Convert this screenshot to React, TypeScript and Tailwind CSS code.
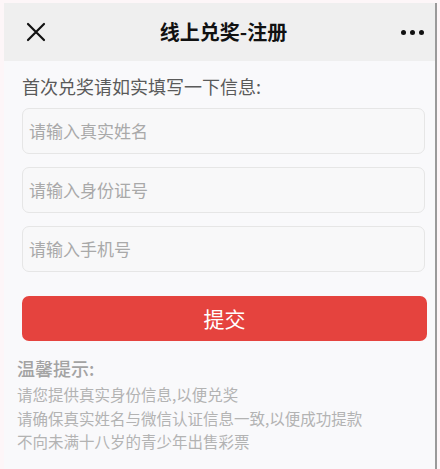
// --- Main Component
const fields = ["请输入真实姓名", "请输入身份证号", "请输入手机号"];

const tips = [
  "请您提供真实身份信息,以便兑奖",
  "请确保真实姓名与微信认证信息一致,以便成功提款",
  "不向未满十八岁的青少年出售彩票",
];

const App = () => {
  return (
    <div
      className="w-[440px] h-[469px] bg-[#fdf6f8] pt-[3px] pl-[4px] pr-[3px] overflow-hidden"
      style={{ fontFamily: '"Noto Sans CJK SC", "Noto Sans", sans-serif' }}
    >
      <div className="h-full bg-[#f9f9fb] border-r-2 border-[#9a9a9a] flex flex-col">
        {/* Nav bar */}
        <div className="h-[58px] shrink-0 bg-[#efefef] flex items-center justify-between pl-[22px] pr-[10px]">
          <svg width="20" height="20" viewBox="0 0 20 20" className="text-[#111]">
            <path d="M2 2 L18 18 M18 2 L2 18" stroke="currentColor" strokeWidth="2.2" strokeLinecap="round" />
          </svg>
          <h1 className="text-[20px] font-semibold text-[#111] leading-none">线上兑奖-注册</h1>
          <div className="flex gap-[4px] items-center w-[24px]">
            <span className="w-[5px] h-[5px] rounded-full bg-[#111]" />
            <span className="w-[5px] h-[5px] rounded-full bg-[#111]" />
            <span className="w-[5px] h-[5px] rounded-full bg-[#111]" />
          </div>
        </div>

        {/* Form */}
        <div className="pl-[18px] pr-[8px]">
          <p className="mt-[13px] text-[18px] leading-[24px] text-[#5a5a5a]">首次兑奖请如实填写一下信息:</p>
          <div className="mt-[10px] flex flex-col gap-[13px] mr-[2px]">
            {fields.map((f) => (
              <div
                key={f}
                className="h-[46px] rounded-[7px] border border-[#e6e6e6] bg-[#f8f8f9] flex items-center pl-[6px] text-[17px] text-[#a9a9a9]"
              >
                {f}
              </div>
            ))}
          </div>
          <button className="mt-[24px] w-full h-[45px] rounded-[7px] bg-[#e5433e] text-white text-[21px] flex items-center justify-center">
            提交
          </button>
        </div>

        {/* Tips */}
        <div className="pl-[13px] mt-[15px]">
          <p className="text-[18px] leading-[24px] font-medium text-[#a3a3a3]">温馨提示:</p>
          <div className="mt-[3px] text-[15.5px] leading-[23.5px] text-[#b3b3b3]">
            {tips.map((t) => (
              <p key={t}>{t}</p>
            ))}
          </div>
        </div>
      </div>
    </div>
  );
};

export default App;
